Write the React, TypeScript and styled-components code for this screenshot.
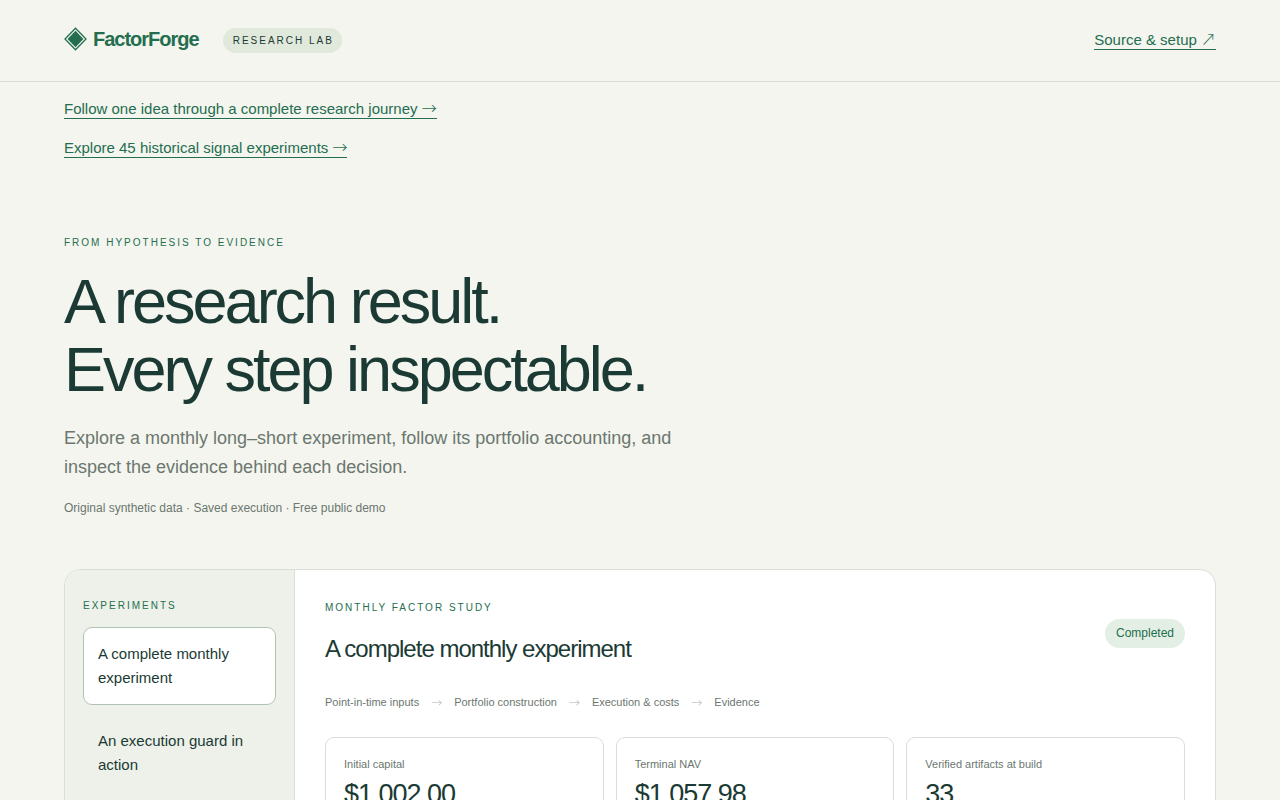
import React, { useState } from "react";
import styled, { createGlobalStyle } from "styled-components";

const color = {
  paper: "#f4f5ef",
  ink: "#1b3a34",
  green: "#246e4f",
  muted: "#6b776f",
  line: "#d9ded8",
  side: "#edf1ea",
};

const GlobalStyle = createGlobalStyle`
  *, *::before, *::after { box-sizing: border-box; }
  body {
    margin: 0;
    background: ${color.paper};
    color: ${color.ink};
    font-family: "Liberation Sans", Arial, sans-serif;
    font-size: 15px;
    line-height: 24px;
  }
  h1, h2, p, ul, ol, dl, dd { margin: 0; padding: 0; }
  button { font: inherit; color: inherit; }
`;

const Header = styled.header`
  display: flex;
  align-items: center;
  justify-content: space-between;
  padding: 20px 64px;
  border-bottom: 1px solid ${color.line};
`;

const BrandGroup = styled.div`
  display: flex;
  align-items: center;
  gap: 24px;
  min-height: 41px;
`;

const Brand = styled.div`
  display: flex;
  align-items: center;
  gap: 6px;
  padding-bottom: 4px;
  color: ${color.green};
  font-size: 20px;
  font-weight: 700;
  letter-spacing: -1px;
  svg { display: block; }
`;

const LabTag = styled.span`
  padding: 4px 8px 4px 10px;
  border-radius: 20px;
  background: #e0e9dc;
  font-size: 10px;
  line-height: 17px;
  letter-spacing: 2px;
  text-transform: uppercase;
`;

const TextLink = styled.a`
  color: ${color.green};
  line-height: 18px;
  text-decoration: none;
  border-bottom: 1px solid ${color.green};
`;

const Arrow = styled.span`
  font-family: "Noto Sans CJK JP", sans-serif;
  font-weight: 300;
  line-height: 0;
`;

const LinkList = styled.nav`
  display: flex;
  flex-direction: column;
  align-items: flex-start;
  gap: 20px;
  padding: 18px 64px 0;
`;

const Hero = styled.section`
  padding: 77px 64px 52px;
`;

const Eyebrow = styled.p`
  color: ${color.green};
  font-size: 10px;
  line-height: 16px;
  letter-spacing: 2px;
  text-transform: uppercase;
`;

const Title = styled.h1`
  margin-top: 16px;
  font-size: 63px;
  line-height: 68px;
  font-weight: 400;
  letter-spacing: -3px;
`;

const Lead = styled.p`
  max-width: 640px;
  margin-top: 21px;
  color: ${color.muted};
  font-size: 18px;
  line-height: 29px;
`;

const Note = styled.p`
  margin-top: 17px;
  color: ${color.muted};
  font-size: 12px;
  line-height: 18px;
`;

const Panel = styled.main`
  display: grid;
  grid-template-columns: 230px 1fr;
  margin: 0 64px 64px;
  border: 1px solid ${color.line};
  border-radius: 16px;
  background: #fff;
  overflow: hidden;
`;

const Sidebar = styled.aside`
  padding: 28px 18px;
  border-right: 1px solid ${color.line};
  background: ${color.side};
`;

const ExperimentList = styled.div`
  display: flex;
  flex-direction: column;
  gap: 9px;
  margin-top: 13px;
`;

const ExperimentButton = styled.button<{ $active: boolean }>`
  padding: 14px;
  border: 1px solid ${(p) => (p.$active ? "#b0c4b2" : "transparent")};
  border-radius: 9px;
  background: ${(p) => (p.$active ? "#fff" : "transparent")};
  text-align: left;
  cursor: pointer;
`;

const Study = styled.section`
  padding: 30px;
`;

const StudyHead = styled.div`
  display: flex;
  align-items: center;
  justify-content: space-between;
`;

const StudyTitle = styled.h2`
  margin-top: 16px;
  font-size: 24px;
  line-height: 34px;
  font-weight: 400;
  letter-spacing: -1px;
`;

const Status = styled.span`
  padding: 5px 11px;
  border-radius: 20px;
  background: #e3efe4;
  color: ${color.green};
  font-size: 12px;
  line-height: 19px;
`;

const Steps = styled.ol`
  display: flex;
  flex-wrap: wrap;
  gap: 12px;
  margin-top: 27px;
  color: ${color.muted};
  font-size: 11px;
  line-height: 18px;
  list-style: none;
`;

const Step = styled.li`
  display: flex;
  gap: 12px;
`;

const StepArrow = styled(Arrow)`
  color: #adb8b0;
  line-height: 18px;
`;

const Metrics = styled.dl`
  display: grid;
  grid-template-columns: repeat(3, 1fr);
  gap: 12px;
  margin-top: 26px;
`;

const Metric = styled.div`
  padding: 17px 18px;
  border: 1px solid ${color.line};
  border-radius: 9px;
`;

const MetricLabel = styled.dt`
  color: ${color.muted};
  font-size: 11px;
  line-height: 18px;
`;

const MetricValue = styled.dd`
  margin-top: 4px;
  font-size: 27px;
  line-height: 34px;
  letter-spacing: -1px;
`;

const experiments = ["A complete monthly experiment", "An execution guard in action"];
const steps = ["Point-in-time inputs", "Portfolio construction", "Execution & costs", "Evidence"];
const metrics = [
  ["Initial capital", "$1,002.00"],
  ["Terminal NAV", "$1,057.98"],
  ["Verified artifacts at build", "33"],
];

const BrandMark = () => (
  <svg width="23" height="24" viewBox="0 0 23 24" aria-hidden="true">
    <path d="M11.5 1.2 22 12 11.5 22.8 1 12Z" fill="none" stroke="currentColor" strokeWidth="1.3" />
    <path d="M11.5 3.8 19.4 12 11.5 20.2 3.6 12Z" fill="currentColor" />
  </svg>
);

export default function App() {
  const [selected, setSelected] = useState(0);
  return (
    <>
      <GlobalStyle />
      <Header>
        <BrandGroup>
          <Brand>
            <BrandMark />
            FactorForge
          </Brand>
          <LabTag>Research lab</LabTag>
        </BrandGroup>
        <TextLink href="#setup">
          Source &amp; setup <Arrow>↗</Arrow>
        </TextLink>
      </Header>
      <LinkList>
        <TextLink href="#journey">
          Follow one idea through a complete research journey <Arrow>→</Arrow>
        </TextLink>
        <TextLink href="#signals">
          Explore 45 historical signal experiments <Arrow>→</Arrow>
        </TextLink>
      </LinkList>
      <Hero>
        <Eyebrow>From hypothesis to evidence</Eyebrow>
        <Title>
          A research result.
          <br />
          Every step inspectable.
        </Title>
        <Lead>
          Explore a monthly long–short experiment, follow its portfolio accounting, and inspect the
          evidence behind each decision.
        </Lead>
        <Note>Original synthetic data · Saved execution · Free public demo</Note>
      </Hero>
      <Panel>
        <Sidebar>
          <Eyebrow>Experiments</Eyebrow>
          <ExperimentList>
            {experiments.map((name, i) => (
              <ExperimentButton
                key={name}
                type="button"
                $active={i === selected}
                aria-pressed={i === selected}
                onClick={() => setSelected(i)}
              >
                {name}
              </ExperimentButton>
            ))}
          </ExperimentList>
        </Sidebar>
        <Study>
          <StudyHead>
            <div>
              <Eyebrow>Monthly factor study</Eyebrow>
              <StudyTitle>A complete monthly experiment</StudyTitle>
            </div>
            <Status>Completed</Status>
          </StudyHead>
          <Steps>
            {steps.map((step, i) => (
              <Step key={step}>
                {step}
                {i < steps.length - 1 && <StepArrow>→</StepArrow>}
              </Step>
            ))}
          </Steps>
          <Metrics>
            {metrics.map(([label, value]) => (
              <Metric key={label}>
                <MetricLabel>{label}</MetricLabel>
                <MetricValue>{value}</MetricValue>
              </Metric>
            ))}
          </Metrics>
        </Study>
      </Panel>
    </>
  );
}
